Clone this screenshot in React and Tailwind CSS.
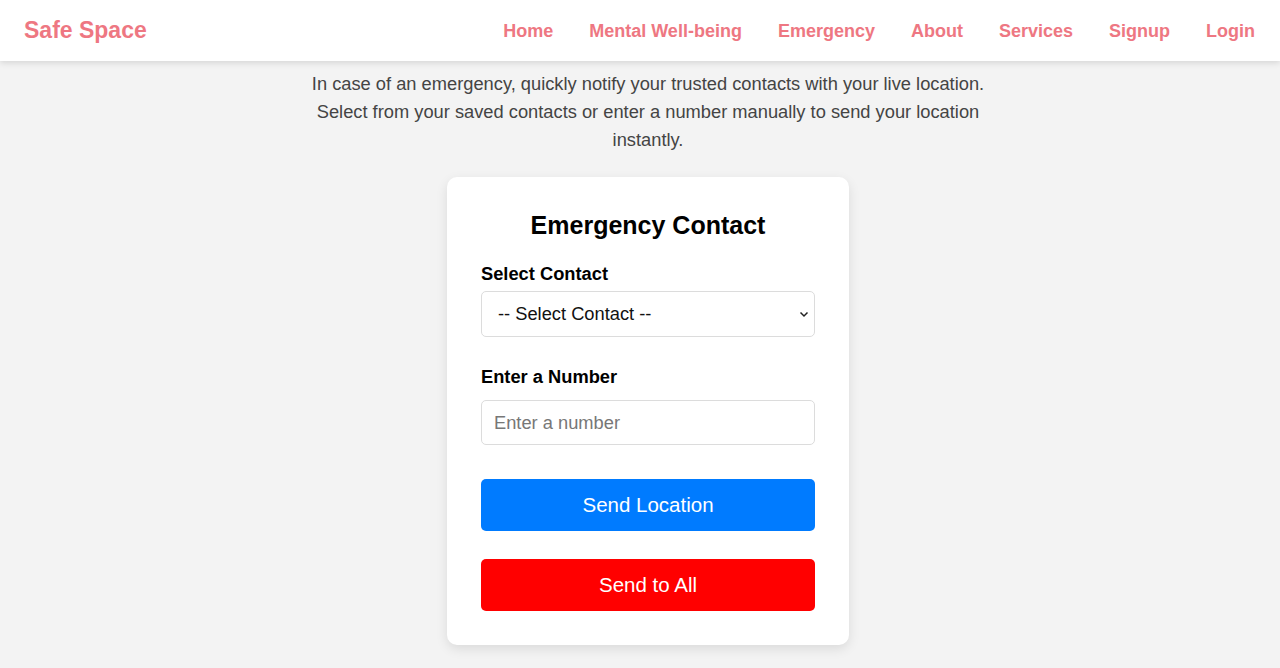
import React from "react";

const font = { fontFamily: '"Liberation Sans", Arial, sans-serif' };

export default function App() {
  const links = ["Home", "Mental Well-being", "Emergency", "About", "Services", "Signup", "Login"];
  return (
    <div className="min-h-[668px] bg-[#f3f3f3] font-['Liberation_Sans',Arial,sans-serif]" style={font}>
      <nav className="h-[61px] bg-white flex items-center justify-between pl-[24px] pr-[25px] shadow-[0_2px_6px_rgba(0,0,0,0.12)] relative">
        <div className="text-[23px] font-bold text-[#ee7782] leading-none">Safe Space</div>
        <ul className="flex items-center gap-[36px]">
          {links.map((l) => (
            <li key={l} className="text-[18px] font-bold text-[#ee7782] leading-none">{l}</li>
          ))}
        </ul>
      </nav>
      <main className="flex flex-col items-center pl-[16px]">
        <p className="w-[700px] text-center text-[18.3px] leading-[28px] text-[#444] mt-[9px]">
          In case of an emergency, quickly notify your trusted contacts with your live location. Select from your saved contacts or enter a number manually to send your location instantly.
        </p>
        <div className="mt-[23px] w-[402px] bg-white rounded-[10px] shadow-[0_4px_12px_rgba(0,0,0,0.1)] px-[34px] pt-[34px] pb-[34px]">
          <h2 className="text-[25px] font-bold leading-[28px] text-center text-black">Emergency Contact</h2>
          <label className="block mt-[24px] text-[18.3px] font-bold leading-[21px] text-black">Select Contact</label>
          <div className="relative mt-[7px]">
            <div className="h-[46px] w-full border border-[#dcdcdc] rounded-[5px] flex items-center pl-[16px] text-[18.3px] text-[#111] bg-white">
              -- Select Contact --
            </div>
            <svg className="absolute right-[6px] top-[18px]" width="10" height="10" viewBox="0 0 10 10">
              <path d="M1.5 3.5 L5 7 L8.5 3.5" fill="none" stroke="#222" strokeWidth="1.5" />
            </svg>
          </div>
          <label className="block mt-[29px] text-[18.3px] font-bold leading-[21px] text-black">Enter a Number</label>
          <input
            placeholder="Enter a number"
            className="mt-[13px] block h-[45px] w-full border border-[#dcdcdc] rounded-[5px] px-[12px] text-[18.3px] placeholder:text-[#777] outline-none"
            style={font}
          />
          <button className="mt-[34px] block w-full h-[52px] rounded-[5px] bg-[#007bff] text-white text-[20.5px]" style={font}>Send Location</button>
          <button className="mt-[28px] block w-full h-[52px] rounded-[5px] bg-[#ff0000] text-white text-[20.5px]" style={font}>Send to All</button>
        </div>
      </main>
    </div>
  );
}
